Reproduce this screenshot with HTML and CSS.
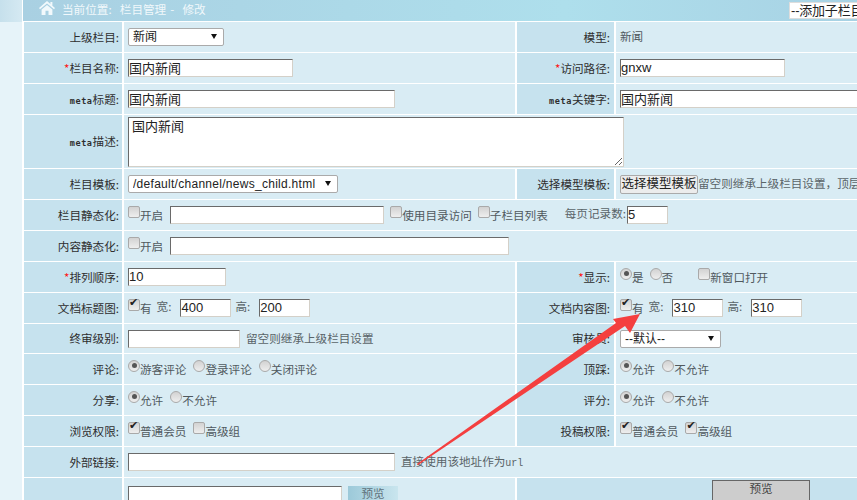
FILE: index.html
```html
<!DOCTYPE html>
<html lang="zh">
<head>
<meta charset="utf-8">
<title>栏目管理 - 修改</title>
<link rel="stylesheet" href="styles.css">
</head>
<body>
<div class="page">
  <aside class="side"><div class="side-top"></div></aside>
  <main class="main">
    <header class="bar">
      <svg class="home" viewBox="0 0 16 14" width="16" height="14"><path d="M8 0 0 7l1 1.200L8 2.400l7 5.800L16 7l-2.600-2.200V1h-2v2.100zM2.600 8.400 8 3.900l5.400 4.500V14H9.500V9.800h-3V14H2.600z" fill="#f2f9fc"/></svg>
      <span class="crumb">当前位置:  栏目管理 -  修改</span>
      <select class="add"><option>--添加子栏目--</option></select>
    </header>
    <table class="form">
      <colgroup><col class="c1"><col class="c2"><col class="c3"><col class="c4"></colgroup>
      <tr>
        <th>上级栏目:</th>
        <td><span class="selbox"><select class="sel sel-parent"><option>新闻</option></select></span></td>
        <th>模型:</th>
        <td class="muted">新闻</td>
      </tr>
      <tr>
        <th><i>*</i>栏目名称:</th>
        <td><input class="txt w165" value="国内新闻"></td>
        <th><i>*</i>访问路径:</th>
        <td><input class="txt w165" value="gnxw"></td>
      </tr>
      <tr>
        <th><span class="en">meta</span>标题:</th>
        <td><input class="txt w267" value="国内新闻"></td>
        <th><span class="en">meta</span>关键字:</th>
        <td><input class="txt w267" value="国内新闻"></td>
      </tr>
      <tr class="tall">
        <th><span class="en">meta</span>描述:</th>
        <td colspan="3"><textarea class="area">国内新闻</textarea></td>
      </tr>
      <tr>
        <th>栏目模板:</th>
        <td><span class="selbox"><select class="sel sel-tpl"><option>/default/channel/news_child.html</option></select></span></td>
        <th>选择模型模板:</th>
        <td class="nowrap"><button class="pick" type="button">选择模型模板</button><span class="muted">留空则继承上级栏目设置，顶层</span></td>
      </tr>
      <tr>
        <th>栏目静态化:</th>
        <td colspan="3" class="nowrap"><label><input type="checkbox" class="chk">开启</label><input class="txt w214 gapx" value=""><label class="gapl"><input type="checkbox" class="chk">使用目录访问</label><label class="gapm"><input type="checkbox" class="chk">子栏目列表</label><span class="muted gapb">每页记录数:</span><input class="txt w40" value="5"></td>
      </tr>
      <tr>
        <th>内容静态化:</th>
        <td colspan="3"><label><input type="checkbox" class="chk">开启</label><input class="txt w339 gapx" value=""></td>
      </tr>
      <tr>
        <th><i>*</i>排列顺序:</th>
        <td><input class="txt w97" value="10"></td>
        <th><i>*</i>显示:</th>
        <td><label><input type="radio" class="rad" checked>是</label><label class="gapm"><input type="radio" class="rad">否</label><label class="gapw"><input type="checkbox" class="chk">新窗口打开</label></td>
      </tr>
      <tr>
        <th>文档标题图:</th>
        <td><label><input type="checkbox" class="chk" checked>有</label><span class="muted unit">宽:</span><input class="txt w50" value="400"><span class="muted unit">高:</span><input class="txt w50" value="200"></td>
        <th>文档内容图:</th>
        <td><label><input type="checkbox" class="chk" checked>有</label><span class="muted unit">宽:</span><input class="txt w50" value="310"><span class="muted unit">高:</span><input class="txt w50" value="310"></td>
      </tr>
      <tr class="short">
        <th>终审级别:</th>
        <td><input class="txt w112" value=""><span class="muted note">留空则继承上级栏目设置</span></td>
        <th>审核员:</th>
        <td><span class="selbox"><select class="sel sel-audit"><option>--默认--</option></select></span></td>
      </tr>
      <tr>
        <th>评论:</th>
        <td><label><input type="radio" class="rad" checked>游客评论</label><label class="gaps"><input type="radio" class="rad">登录评论</label><label class="gaps"><input type="radio" class="rad">关闭评论</label></td>
        <th>顶踩:</th>
        <td><label><input type="radio" class="rad" checked>允许</label><label class="gaps"><input type="radio" class="rad">不允许</label></td>
      </tr>
      <tr>
        <th>分享:</th>
        <td><label><input type="radio" class="rad" checked>允许</label><label class="gaps"><input type="radio" class="rad">不允许</label></td>
        <th>评分:</th>
        <td><label><input type="radio" class="rad" checked>允许</label><label class="gaps"><input type="radio" class="rad">不允许</label></td>
      </tr>
      <tr>
        <th>浏览权限:</th>
        <td><label><input type="checkbox" class="chk" checked>普通会员</label><label class="gaps"><input type="checkbox" class="chk">高级组</label></td>
        <th>投稿权限:</th>
        <td><label><input type="checkbox" class="chk" checked>普通会员</label><label class="gaps"><input type="checkbox" class="chk" checked>高级组</label></td>
      </tr>
      <tr>
        <th>外部链接:</th>
        <td colspan="3"><input class="txt w267" value=""><span class="muted note">直接使用该地址作为<span class="url">url</span></span></td>
      </tr>
      <tr class="last">
        <th></th>
        <td class="top"><input class="txt w214" value=""><button class="preview" type="button">预览</button></td>
        <th colspan="2" class="last-right"><button class="grey" type="button">预览</button></th>
      </tr>
    </table>
  </main>
  <svg class="arrow" width="857" height="500" viewBox="0 0 857 500"><path d="M417 464 616 323 613 319 640 314 630 333 625 326 418 465z" fill="#f43f3f"/></svg>
</div>
</body>
</html>
```
FILE: styles.css
```css
* { box-sizing: border-box; }
html, body { margin: 0; padding: 0; height: 100%; overflow: hidden; background: #fff; }
body { font: 11.600px/1.2 "Noto Sans CJK SC", "Liberation Sans", sans-serif; color: #333; }
.page { position: relative; display: flex; width: 857px; height: 500px; overflow: hidden; }
.side { flex: 0 0 22px; background: #e6f3f9; }
.side-top { height: 22px; background: linear-gradient(90deg, #c6e0ec, #d5e9f2); }
.main { flex: 1 1 auto; min-width: 0; display: flex; flex-direction: column; background: #fff; }
.bar { flex: 0 0 22px; display: flex; align-items: flex-start; margin-left: 1px; padding: 0 0 0 16px; overflow: hidden; border-bottom: 1px solid #fff; background: linear-gradient(90deg, #a9d0e2, #aedfec 65%, #a8d2e4); }
.home { flex: none; margin-top: 1px; }
.crumb { margin: 3px 0 0 7px; color: #f1f8fb; white-space: pre; word-spacing: 1.500px; }
.add { flex: none; margin: 2px -40px 0 auto; width: 108px; height: 17px; padding: 0 0 0 1px; font: 13px/15px "Liberation Sans", "Noto Sans CJK SC", sans-serif; letter-spacing: -.2px; color: #222; background: #fff; border: 1px solid #ddd; appearance: none; border-radius: 0; }
.form { width: 835px; table-layout: fixed; border-collapse: separate; border-spacing: 0; flex: none; }
.c1 { width: 102px; } .c2 { width: 393px; } .c3 { width: 99px; } .c4 { width: 241px; }
.form tr { height: 31px; }
.form tr.tall { height: 54px; }
.form tr.short { height: 30px; }
.form tr.last { height: 30px; }
.form th, .form td { padding: 0; border: solid #fff; border-width: 0 2px 1px 0; vertical-align: middle; white-space: nowrap; overflow: hidden; }
.form th { background: #c6e2ee; font-weight: 400; text-align: right; padding: 1px 3px 0 0; color: #2e2e2e; }
.form td + th { padding-right: 4px; }
.form td { background: #d9ecf4; padding-left: 4px; color: #50595e; }
.form tr > :last-child { border-right: 0; }
.form td.top { vertical-align: top; padding-top: 8px; }
.form th:first-child { border-left: 2px solid #fff; }
i { color: #f11; font-style: normal; }
.en { font: 700 8.500px "DejaVu Sans Mono", monospace; letter-spacing: .6px; }
.url { font: 10px "Liberation Mono", monospace; }
.muted { color: #5a6468; }
.nowrap { white-space: nowrap; }
label { display: inline-block; vertical-align: middle; margin-bottom: 2px; color: #50595e; }
.txt { display: inline-block; vertical-align: middle; height: 18px; padding: 0 0 2px; font: 13px/1 "Liberation Sans", "Noto Sans CJK SC", sans-serif; color: #222; background: #fff; border: 1px solid #d4d0c8; border-top-color: #6a6a6a; border-left-color: #6a6a6a; border-radius: 0; }
.w40 { width: 41px; } .w50 { width: 51px; } .w97 { width: 98px; } .w112 { width: 112px; }
.w165 { width: 165px; } .w214 { width: 214px; } .w267 { width: 267px; } .w339 { width: 339px; }
.area { display: block; width: 496px; height: 50px; padding: 1px 3px; font: 13px/1.3 "Liberation Sans", "Noto Sans CJK SC", sans-serif; color: #222; background: #fff; border: 1px solid #d4d0c8; border-top-color: #6a6a6a; border-left-color: #6a6a6a; border-radius: 0; resize: both; }
.selbox { position: relative; display: inline-block; vertical-align: middle; }
.selbox::after { content: ""; position: absolute; right: 7px; top: 6px; border: 3px solid transparent; border-top: 5px solid #111; border-bottom: 0; pointer-events: none; }
.sel { display: block; appearance: none; height: 18px; padding: 0 0 0 4px; font: 12px/16px "Liberation Sans", "Noto Sans CJK SC", sans-serif; color: #222; background: #fff; border: 1px solid #aaa; border-radius: 2px; }
.sel-parent { width: 96px; }
.sel-tpl { width: 210px; letter-spacing: .28px; }
.sel-audit { width: 101px; }
.pick { height: 19px; width: 78px; padding: 0; vertical-align: middle; font: 12.500px/1 "Liberation Sans", "Noto Sans CJK SC", sans-serif; white-space: nowrap; overflow: hidden; color: #222; background: #ececec; border: 1px solid #aaa; border-radius: 2px; }
.chk, .rad { appearance: none; position: relative; display: inline-block; width: 12px; height: 12px; margin: 0; vertical-align: 2px; background: linear-gradient(#d2d2d2, #eee); border: 1px solid #a9a9a9; }
.chk { border-radius: 2px; }
.rad { border-radius: 50%; }
.chk:checked::before { content: "✔"; position: absolute; left: 0; top: -4px; font: 11px/14px "DejaVu Sans", sans-serif; color: #222; }
.rad:checked::before { content: ""; position: absolute; left: 2.500px; top: 2.500px; width: 5px; height: 5px; border-radius: 50%; background: #555; }
.gapx { margin-left: 7px; }
.gapl { margin-left: 6px; }
.gapm { margin-left: 6px; }
.gaps { margin-left: 7px; }
.gapw { margin-left: 25px; }
.gapb { margin: 0 1px 2px 17px; display: inline-block; vertical-align: middle; }
.unit { display: inline-block; vertical-align: middle; margin: 0 9px 2px 5px; }
.unit + .txt + .unit { margin-left: 4px; }
.note { display: inline-block; vertical-align: middle; margin-left: 6px; }
.preview { height: 16px; width: 50px; margin-left: 6px; padding: 0; vertical-align: top; font: 11.600px/1 "Noto Sans CJK SC", sans-serif; color: #60727c; background: linear-gradient(90deg, #9cc9d9, #c9e5ee); border: 0; }
.last-right { padding: 2px 0 0 195px !important; text-align: left !important; vertical-align: top !important; }
.grey { display: block; width: 98px; height: 22px; padding: 0 0 4px; font: 11.600px/1 "Noto Sans CJK SC", sans-serif; color: #444; background: #cdcdcd; border: 1px solid #666; }
.arrow { position: absolute; left: 0; top: 0; pointer-events: none; }
```
